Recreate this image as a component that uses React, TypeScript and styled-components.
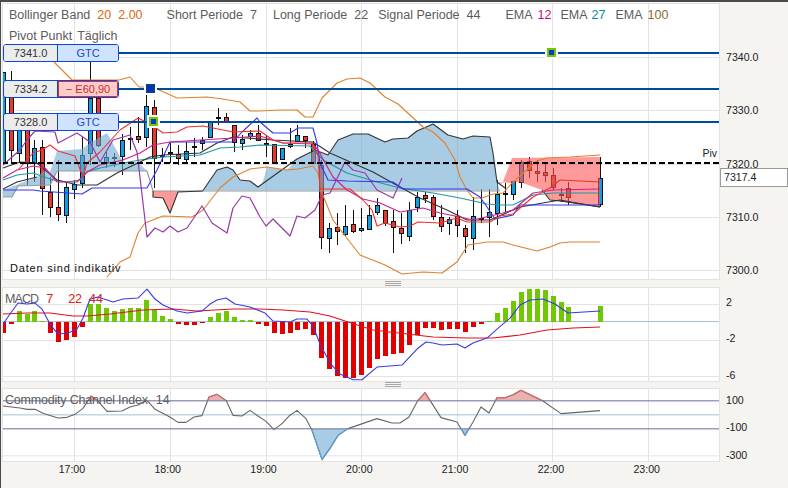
import styled, { createGlobalStyle } from 'styled-components'

const GlobalStyle = createGlobalStyle`
  html, body {
    margin: 0;
    padding: 0;
    background: #f5f4f1;
  }
`

// [index, colour, bodyTop, bodyBottom, wickTop, wickBottom]
type Candle = [number, 'r' | 'b' | 'd', number, number, number, number]

const candles: Candle[] = [
  [0, 'b', 72, 163, 72, 165], [1, 'r', 96, 150, 71, 163], [2, 'b', 125, 153, 120, 163], [3, 'r', 125, 163, 118, 185],
  [4, 'b', 148, 163, 140, 182], [5, 'r', 147, 188, 140, 215], [6, 'r', 192, 207, 177, 217], [7, 'r', 207, 214, 160, 221],
  [8, 'b', 187, 215, 183, 223], [9, 'b', 184, 189, 180, 199], [10, 'b', 155, 183, 137, 188], [11, 'b', 98, 153, 62, 165],
  [12, 'r', 98, 145, 88, 147], [13, 'b', 157, 162, 152, 168], [14, 'd', 157, 158, 153, 167], [15, 'b', 140, 156, 134, 175],
  [16, 'd', 138, 139, 127, 150], [17, 'r', 136, 139, 117, 143], [18, 'b', 106, 137, 95, 147], [19, 'r', 107, 158, 100, 188],
  [20, 'd', 155, 156, 148, 162], [21, 'd', 152, 153, 143, 163], [22, 'r', 154, 158, 145, 165], [23, 'b', 151, 159, 142, 163],
  [24, 'd', 146, 147, 138, 157], [25, 'b', 140, 143, 137, 150], [26, 'b', 122, 137, 122, 138], [27, 'd', 117, 118, 108, 125],
  [28, 'r', 117, 121, 113, 122], [29, 'r', 125, 142, 125, 152], [30, 'b', 139, 143, 135, 150], [31, 'b', 133, 136, 130, 140],
  [32, 'r', 133, 140, 125, 141], [33, 'd', 143, 144, 135, 157], [34, 'r', 144, 162, 144, 163], [35, 'b', 148, 159, 148, 160],
  [36, 'r', 144, 146, 128, 148], [37, 'b', 135, 141, 125, 141], [38, 'r', 136, 140, 136, 148], [39, 'r', 144, 163, 141, 164],
  [40, 'r', 165, 237, 160, 249], [41, 'b', 228, 238, 223, 253], [42, 'r', 227, 231, 213, 245], [43, 'b', 226, 234, 205, 236],
  [44, 'r', 224, 231, 210, 233], [45, 'b', 228, 230, 208, 232], [46, 'b', 215, 229, 205, 230], [47, 'b', 205, 212, 198, 215],
  [48, 'r', 210, 223, 210, 226], [49, 'r', 221, 227, 210, 253], [50, 'r', 228, 233, 213, 244], [51, 'b', 210, 236, 202, 241],
  [52, 'b', 197, 207, 192, 212], [53, 'r', 195, 198, 192, 203], [54, 'r', 197, 216, 195, 220], [55, 'r', 217, 226, 205, 232],
  [56, 'b', 219, 223, 217, 235], [57, 'r', 216, 225, 210, 237], [58, 'r', 228, 236, 225, 253], [59, 'b', 216, 238, 197, 250],
  [60, 'd', 218, 219, 189, 223], [61, 'b', 212, 217, 189, 237], [62, 'b', 194, 213, 180, 225], [63, 'd', 193, 194, 183, 212],
  [64, 'b', 181, 194, 181, 200], [65, 'b', 162, 182, 160, 188], [66, 'r', 161, 170, 157, 178], [67, 'r', 171, 173, 160, 182],
  [68, 'r', 172, 175, 163, 182], [69, 'r', 175, 187, 168, 190], [70, 'd', 194, 195, 188, 202], [71, 'r', 188, 197, 182, 205]
]

const macdBars = [
  332, 322.5, 310, 312.7, 310, 320, 331.7, 340.7, 339, 336, 326, 302.7, 303, 306.7, 310, 308, 306.7, 306.7, 299, 309,
  314.7, 318, 323, 324, 324, 321.7, 316, 311.7, 310, 315.7, 318.7, 319, 322.7, 325, 332, 332.7, 331.7, 329, 328, 334,
  357, 368, 375, 376.7, 377, 374, 366.7, 357.7, 355, 353, 352, 344, 334, 327, 327, 329, 327.7, 327.7, 330.7, 326, 323,
  320, 312, 306.7, 300, 291, 288.3, 288.3, 289.3, 294.7, 301, 306
]

const upperBand = '54,62 72,80 119,80 130,77 139,87 147,87 157,89 177,98 207,97 223,99 240,102 250,111 260,111 280,110 297,110 305,117 313,117 322,98 337,83 347,79 360,78 370,83 385,97 398,104 410,115 423,127 433,132 445,143 455,160 460,177 467,190 473,198 482,198 493,194 503,193 513,182 537,161 547,158 570,157 600,155'
const lowerBand = '107,277 120,262 130,257 138,233 145,223 163,216 192,217 203,210 220,188 233,177 250,169 267,167 287,170 298,169 313,166 318,173 322,193 333,220 360,255 385,265 402,274 423,272 442,273 457,262 468,245 487,242 503,242 513,245 537,251 550,247 560,243 570,242 600,242'
const blueLine = '3,190 33,190 40,191 82,194 92,188 147,188 157,170 170,142 233,142 242,132 257,118 260,122 273,133 290,133 298,128 313,128 317,143 320,163 328,180 347,181 393,182 403,189 467,189 480,197 487,207 495,219 513,215 520,205 600,205'
const redLine = '18,170 33,153 42,150 50,145 58,151 75,156 83,177 87,163 100,152 120,130 138,118 152,125 163,133 177,132 187,127 203,126 213,128 233,132 260,131 273,140 283,143 313,144 318,155 320,189 350,189 363,200 372,210 377,226 385,223 400,227 410,226 418,222 440,223 457,218 467,222 490,222 500,216 513,214 533,197 550,188 560,180 600,182'
const magentaLine = '3,178 17,170 33,166 45,168 57,182 77,182 87,172 100,165 123,160 140,153 153,145 170,142 233,138 260,136 273,140 283,143 312,143 318,150 333,177 347,190 363,199 380,203 400,212 423,208 440,213 460,217 473,220 490,216 503,213 513,210 533,193 553,190 600,189'
const purpleLine = '3,165 20,150 27,140 35,131 55,132 58,143 77,133 90,142 100,162 113,140 130,135 137,152 147,237 155,228 163,232 170,226 178,232 187,228 202,206 212,223 227,233 233,208 242,196 250,198 260,217 266,226 273,219 290,236 297,216 305,218 315,210 322,195 330,193 345,162 353,170 365,173 377,190 393,198 402,178'
const tealLine = '3,180 17,175 33,173 53,180 67,182 80,180 87,172 100,168 123,163 140,160 163,157 200,155 220,148 240,147 260,145 310,146 323,160 347,173 377,182 400,188 433,193 460,198 487,204 503,205 513,205 533,195 553,193 600,193'
const blackTrendA = '3,168 20,162 37,163 57,180 78,185 97,185 117,173 140,162 150,157 163,155 200,153 217,143 233,137 273,140 313,142 330,153 373,172 400,187 420,198 447,210 467,220 490,220 520,207 560,200 600,207'
const blackTrendB = '3,189 17,182 37,177'
const cloudEdge = '3,197 12,197 18,186 50,185 57,171 147,171 153,191 500,191'

const leftCloud = '3,190 37,177 45,170 50,172 57,151 82,149 90,143 107,133 123,162 138,162 147,171 57,171 50,185 18,186 12,197 3,197'
const midCloud = '203,190.5 217,170 227,167 233,170 240,180 250,181 258,187 262,185 267,167 287,170 297,159 315,150 328,155 338,140 353,134 368,134 385,142 393,139 408,138 417,131 433,124 448,135 463,139 473,136 490,137 493,153 497,182 500,190.5'
const midCloudTop = '203,190.5 217,170 227,167 233,170 240,180 250,181 258,187 297,159 315,150 328,155 338,140 353,134 368,134 385,142 393,139 408,138 417,131 433,124 448,135 463,139 473,136 490,137 493,153 497,182 505,188'
const redDip = '153,191 153,197 163,198 170,213 178,192 203,191'
const redCloud = '497,182 502,184 512,158 600,157 600,207 560,201 550,200 542,190 520,182 510,183'

const macdBlue = '3,323 10,313 18,302 27,303 35,302 42,308 50,323 58,333 68,332 77,328 83,317 90,298 98,296 113,301 123,298 138,297 147,288 155,298 163,304 177,310 187,312 202,310 210,303 217,299 226,297 235,303 250,306 260,310 265,312 273,320 290,321 297,318 307,318 313,325 320,343 330,362 340,373 353,378.7 362,378.7 377,366 402,364 417,348 426,341 433,342 442,344 457,343 465,347 473,342 487,337 497,328 510,317 520,304 530,299 543,298 555,303 568,312 600,310'
const macdRed = '3,313 27,312 50,312 73,315 87,315 110,313 143,309 173,308 197,310 233,308 260,308 283,309 310,311 330,315 348,321 373,329 407,333 433,336 467,337 493,337 520,334 547,329 573,327 600,326'

const cci = '3,405.7 20,407.7 27,409 35,409 43,413 58,417.7 67,417 75,414 83,408 91,395.7 98,400.7 107,411 122,410.7 130,406.7 138,404.7 147,400 155,409 170,416.7 178,422 186,422 194,416.7 202,415.3 209,396.7 217,394 226,400 233,415 242,415.7 250,410 258,415.7 266,421 274,429.3 282,423.3 289,415.7 297,410 306,418.3 312,430 322,459.3 330,448 338,435 348,428.3 377,418.3 392,422.7 400,422.7 409,416.7 418,400 425,392.3 430,400 441,417.3 457,421.7 465,435 473,421.7 481,406.7 489,412.7 497,397.3 505,397.3 513,394.3 521,390 543,400.7 561,413.3 600,410.3'

const timeGrid = [74.5, 170.5, 266.5, 361.5, 457.5, 552.5, 648.5]
const barX = (i: number) => Math.round(2.6 + 7.97 * i)

const TimeGrid = ({ top, bottom }: { top: number; bottom: number }) => (
  <>
    {timeGrid.map(x => (
      <line key={x} x1={x} x2={x} y1={top} y2={bottom} stroke="#e3e3e3" />
    ))}
  </>
)

const HLines = ({ ys, color = '#e3e3e3' }: { ys: number[]; color?: string }) => (
  <>
    {ys.map(y => (
      <line key={y} x1={2} x2={720} y1={y} y2={y} stroke={color} />
    ))}
  </>
)

const Trend = ({ points, color, width = 1.1 }: { points: string; color: string; width?: number }) => (
  <polyline points={points} fill="none" stroke={color} strokeWidth={width} strokeLinejoin="round" />
)

const CandleBar = ({ data }: { data: Candle }) => {
  const [i, kind, top, bottom, wickTop, wickBottom] = data
  const x = barX(i)
  const fill = kind === 'r' ? '#e8392e' : kind === 'b' ? '#0a9fe6' : '#111'
  return (
    <g shapeRendering="crispEdges">
      <line x1={x + 0.5} x2={x + 0.5} y1={wickTop} y2={wickBottom} stroke="#111" />
      <rect x={x - 1.5} y={top + 0.5} width={4} height={bottom - top} fill={fill} stroke="#111" />
    </g>
  )
}

const MainChart = () => (
  <ChartSvg viewBox="2 3 718 277">
    <HLines ys={[57.5, 110.5, 164.5, 217.5, 270.5]} />
    <TimeGrid top={3} bottom={280} />
    {candles.map(c => (
      <CandleBar key={c[0]} data={c} />
    ))}
    <CandleBar data={[75, 'b', 178, 204, 157, 207]} />
    <polygon points={leftCloud} fill="#70aad4" fillOpacity={0.6} />
    <polygon points={midCloud} fill="#70aad4" fillOpacity={0.6} />
    <polygon points={redDip} fill="#ff5757" fillOpacity={0.6} />
    <polygon points={redCloud} fill="#ff5757" fillOpacity={0.6} />
    <Trend points={cloudEdge} color="#999" width={1.2} />
    <Trend points={midCloudTop} color="#333" />
    <Trend points={redDip} color="#333" />
    <Trend points="542,190 550,200 560,201 600,207" color="#333" />
    <Trend points={upperBand} color="#e0802c" />
    <Trend points={lowerBand} color="#e0802c" />
    <Trend points={tealLine} color="#1f98a2" width={1.2} />
    <Trend points={blackTrendA} color="#333" />
    <Trend points={blackTrendB} color="#333" />
    <Trend points={purpleLine} color="#973aa8" width={1.2} />
    <Trend points={blueLine} color="#3535ee" />
    <Trend points={magentaLine} color="#c8258c" width={1.2} />
    <Trend points={redLine} color="#f03030" />
    <line x1={2} x2={720} y1={163} y2={163} stroke="#000" strokeWidth={2} strokeDasharray="6 3" />
    {[53, 89, 122].map(y => (
      <line key={y} x1={118} x2={720} y1={y} y2={y} stroke="#004a9c" strokeWidth={2} />
    ))}
  </ChartSvg>
)

const MacdChart = () => (
  <ChartSvg viewBox="2 287 718 93">
    <HLines ys={[303.5, 339.5, 375.5]} />
    <TimeGrid top={287} bottom={380} />
    <HLines ys={[320.5]} color="#a8bccd" />
    {macdBars.map((y, i) => (
      <rect
        key={i}
        x={barX(i) - 2}
        width={5}
        y={Math.min(y, 320.5)}
        height={Math.abs(y - 320.5)}
        fill={y < 320.5 ? '#6fc800' : '#e00000'}
        shapeRendering="crispEdges"
      />
    ))}
    <rect x={598} width={5} y={305} height={15.5} fill="#6fc800" shapeRendering="crispEdges" />
    <Trend points={macdRed} color="#e01020" />
    <Trend points={macdBlue} color="#3a3ae0" />
  </ChartSvg>
)

const CciChart = () => (
  <ChartSvg viewBox="2 388 718 73">
    <defs>
      <clipPath id="cci-over">
        <rect x={2} y={388} width={718} height={12.3} />
      </clipPath>
      <clipPath id="cci-under">
        <rect x={2} y={428.3} width={718} height={33} />
      </clipPath>
    </defs>
    <HLines ys={[455.5]} />
    <TimeGrid top={388} bottom={461} />
    <polygon points={`${cci} 600,400.3 3,400.3`} fill="#e8b2b0" clipPath="url(#cci-over)" />
    <polygon points={`${cci} 600,428.3 3,428.3`} fill="#a9cce5" clipPath="url(#cci-under)" />
    <HLines ys={[414.5]} color="#a8bfd4" />
    <HLines ys={[400.5, 428.5]} color="#6c6c9c" />
    <Trend points={cci} color="#666" />
    <g clipPath="url(#cci-over)">
      <Trend points={cci} color="#d86a6a" />
    </g>
    <g clipPath="url(#cci-under)">
      <Trend points={cci} color="#5aa0d8" />
    </g>
  </ChartSvg>
)

const App = () => (
  <Page>
    <GlobalStyle />
    <Pane $height={277}>
      <Plot>
        <MainChart />
        <Legend>
          <LegendRow>
            <LegendLabel>Bollinger Band</LegendLabel>
            <LegendValue $color="#d8680e" $gap={7}>20</LegendValue>
            <LegendValue $color="#d8680e" $gap={7}>2.00</LegendValue>
            <LegendLabel $gap={24}>Short Periode</LegendLabel>
            <LegendValue $gap={7}>7</LegendValue>
            <LegendLabel $gap={16}>Long Periode</LegendLabel>
            <LegendValue $gap={7}>22</LegendValue>
            <LegendLabel $gap={10}>Signal Periode</LegendLabel>
            <LegendValue $gap={7}>44</LegendValue>
            <LegendLabel $gap={25}>EMA</LegendLabel>
            <LegendValue $color="#c0107a" $gap={5}>12</LegendValue>
            <LegendLabel $gap={9}>EMA</LegendLabel>
            <LegendValue $color="#0a8a9a" $gap={4}>27</LegendValue>
            <LegendLabel $gap={10}>EMA</LegendLabel>
            <LegendValue $color="#8a6a2a" $gap={5}>100</LegendValue>
          </LegendRow>
          <LegendRow>
            <LegendLabel>Pivot Punkt</LegendLabel>
            <LegendLabel $gap={5}>Täglich</LegendLabel>
          </LegendRow>
        </Legend>
        <OrderTag $top={41}>
          <TagPrice>7341.0</TagPrice>
          <TagAction>GTC</TagAction>
        </OrderTag>
        <OrderTag $top={77}>
          <TagPrice>7334.2</TagPrice>
          <TagAction $loss>− E60,90</TagAction>
        </OrderTag>
        <OrderTag $top={110}>
          <TagPrice>7328.0</TagPrice>
          <TagAction>GTC</TagAction>
        </OrderTag>
        <Marker $x={144} $y={81} $kind="navy" />
        <Marker $x={147} $y={114} $kind="green" />
        <Marker $x={545} $y={45} $kind="green" />
        <PivotLabel>Piv</PivotLabel>
        <Disclaimer>Daten sind indikativ</Disclaimer>
      </Plot>
      <PriceAxis $pad={47} $gap={39.25}>
        <span>7340.0</span>
        <span>7330.0</span>
        <span>7320.0</span>
        <span>7310.0</span>
        <span>7300.0</span>
        <LastPrice>7317.4</LastPrice>
      </PriceAxis>
    </Pane>
    <Grip $height={7} />
    <Pane $height={93}>
      <Plot>
        <MacdChart />
        <PaneLegend>
          <LegendLabel $tracking={-0.9}>MACD</LegendLabel>
          <LegendValue $color="#d82020" $gap={8}>7</LegendValue>
          <LegendValue $color="#d82020" $gap={15}>22</LegendValue>
          <LegendValue $color="#d82020" $gap={7}>44</LegendValue>
        </PaneLegend>
      </Plot>
      <PriceAxis $pad={7.5} $gap={22.8}>
        <span>2</span>
        <span>-2</span>
        <span>-6</span>
      </PriceAxis>
    </Pane>
    <Grip $height={8} />
    <Pane $height={73}>
      <Plot>
        <CciChart />
        <PaneLegend>
          <LegendLabel $tracking={-0.2}>Commodity Channel Index</LegendLabel>
          <LegendLabel $gap={8}>14</LegendLabel>
        </PaneLegend>
      </Plot>
      <PriceAxis $pad={4.7} $gap={13.5}>
        <span>100</span>
        <span>-100</span>
        <span>-300</span>
      </PriceAxis>
    </Pane>
    <TimeAxis>
      <span>17:00</span>
      <span>18:00</span>
      <span>19:00</span>
      <span>20:00</span>
      <span>21:00</span>
      <span>22:00</span>
      <span>23:00</span>
    </TimeAxis>
  </Page>
)

export default App

// === Styling === //
const Page = styled.div`
  width: 788px;
  height: 488px;
  box-sizing: border-box;
  display: flex;
  flex-direction: column;
  padding-top: 1px;
  background: #f5f4f1;
  border-top: 2px solid #4a4a4a;
  border-left: 1px solid #4a4a4a;
  overflow: hidden;
  font-family: 'Liberation Sans', Arial, sans-serif;
`

const Pane = styled.div<{ $height: number }>`
  display: grid;
  grid-template-columns: 718px 1fr;
  height: ${({ $height }) => $height}px;
  padding-left: 1px;
  flex: none;
`

const Plot = styled.div`
  position: relative;
  background: #fff;
  outline: 1px solid #e3e3e3;
  outline-offset: -1px;
  overflow: hidden;
`

const ChartSvg = styled.svg`
  display: block;
  width: 100%;
  height: 100%;
`

const Grip = styled.div<{ $height: number }>`
  flex: none;
  height: ${({ $height }) => $height}px;
  display: flex;
  justify-content: center;
  align-items: flex-end;
  padding-right: 3px;

  &::before {
    content: '';
    width: 16px;
    height: 5px;
    margin-bottom: 1px;
    background: repeating-linear-gradient(#a8a8a8 0, #a8a8a8 1px, transparent 1px, transparent 2px);
  }
`

const Legend = styled.div`
  position: absolute;
  top: 4px;
  left: 7px;
  display: flex;
  flex-direction: column;
  gap: 5px;
`

const LegendRow = styled.div`
  display: flex;
  height: 16px;
  line-height: 16px;
  white-space: nowrap;
`

const PaneLegend = styled(LegendRow)`
  position: absolute;
  top: 4px;
  left: 3px;
`

const LegendLabel = styled.span<{ $gap?: number; $tracking?: number }>`
  margin-left: ${({ $gap }) => $gap ?? 0}px;
  letter-spacing: ${({ $tracking }) => $tracking ?? 0}px;
  font-size: 12.5px;
  color: #5c5c5c;
`

const LegendValue = styled.span<{ $color?: string; $gap?: number }>`
  margin-left: ${({ $gap }) => $gap ?? 0}px;
  font-size: 12.5px;
  color: ${({ $color }) => $color ?? '#5c5c5c'};
`

const OrderTag = styled.div<{ $top: number }>`
  position: absolute;
  top: ${({ $top }) => $top}px;
  left: 1px;
  width: 116px;
  height: 18px;
  box-sizing: border-box;
  display: flex;
  border: 1px solid #0a46d8;
  border-radius: 3px;
  overflow: hidden;
  font-size: 11px;
  line-height: 16px;
  text-align: center;
`

const TagPrice = styled.div`
  width: 53px;
  background: #ececec;
  color: #333;
  border-right: 1px solid #0a46d8;
`

const TagAction = styled.div<{ $loss?: boolean }>`
  flex: 1;
  background: ${({ $loss }) => ($loss ? '#ffcccc' : '#cfe3ff')};
  color: ${({ $loss }) => ($loss ? '#c82a2a' : '#1a48d0')};
  box-shadow: ${({ $loss }) => ($loss ? 'inset 0 0 0 1px #d83030' : 'none')};
`

const Marker = styled.div<{ $x: number; $y: number; $kind: 'navy' | 'green' }>`
  position: absolute;
  top: ${({ $y }) => $y}px;
  left: ${({ $x }) => $x}px;
  width: 9px;
  height: 9px;
  box-sizing: border-box;
  border: 2px solid ${({ $kind }) => ($kind === 'green' ? '#6fc800' : '#0a3d8f')};
  background: ${({ $kind }) => ($kind === 'green' ? '#0a3bc8' : '#0a2bc0')};
  box-shadow: 0 0 0 2px #fff;
`

const PivotLabel = styled.span`
  position: absolute;
  top: 143px;
  right: 3px;
  font-size: 10.5px;
  line-height: 14px;
  color: #222;
`

const Disclaimer = styled.span`
  position: absolute;
  top: 258px;
  left: 8px;
  font-size: 11px;
  line-height: 14px;
  letter-spacing: 0.8px;
  color: #111;
`

const PriceAxis = styled.div<{ $pad: number; $gap: number }>`
  position: relative;
  display: flex;
  flex-direction: column;
  gap: ${({ $gap }) => $gap}px;
  padding: ${({ $pad }) => $pad}px 0 0 6px;
  font-size: 10.6px;
  line-height: 14px;
  color: #222;
`

const LastPrice = styled.div`
  position: absolute;
  top: 165px;
  left: 0;
  right: 0;
  height: 19px;
  box-sizing: border-box;
  padding-left: 3px;
  line-height: 17px;
  background: #fff;
  border: 1px solid #9a9a9a;
  color: #222;
`

const TimeAxis = styled.div`
  display: grid;
  grid-template-columns: repeat(7, 95.8px);
  margin-left: 23px;
  padding-top: 1px;
  font-size: 10.6px;
  line-height: 14px;
  color: #222;
  text-align: center;
`
